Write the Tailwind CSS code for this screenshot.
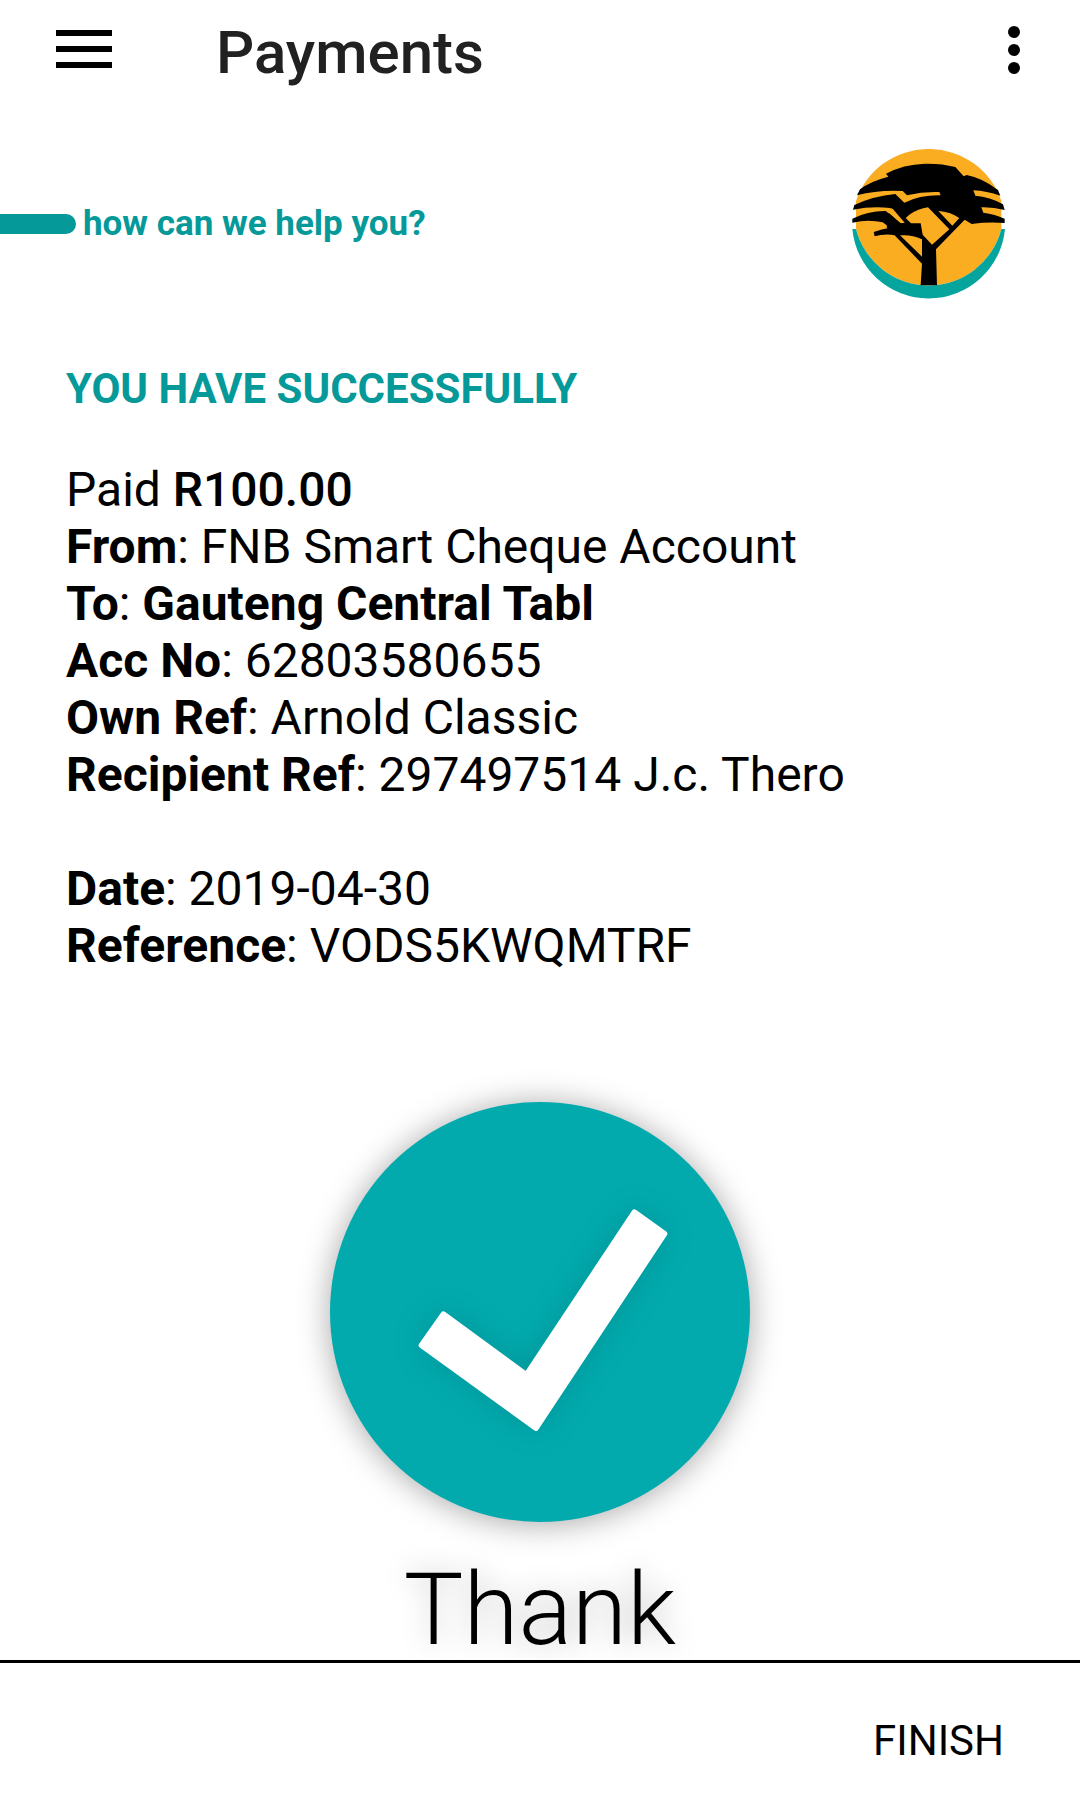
<!DOCTYPE html>
<html lang="en">
<head>
<meta charset="utf-8">
<meta name="viewport" content="width=device-width, initial-scale=1">
<title>Payments</title>
<script src="https://cdn.jsdelivr.net/npm/@tailwindcss/browser@4"></script>
</head>
<body class="flex min-h-screen flex-col bg-white font-['Roboto',sans-serif] text-black">
  <header class="flex h-[98px] items-center pr-[60px] pl-14">
    <button type="button" aria-label="Menu" class="flex w-14 flex-col gap-[10px]">
      <span class="h-[6px] w-full bg-black"></span>
      <span class="h-[6px] w-full bg-black"></span>
      <span class="h-[6px] w-full bg-black"></span>
    </button>
    <h1 class="ml-[104px] flex-1 pt-2 text-[60px] leading-[70px] font-medium text-[#212121]">Payments</h1>
    <button type="button" aria-label="More options" class="flex flex-col gap-[6px] pt-[2px]">
      <span class="size-3 rounded-full bg-black"></span>
      <span class="size-3 rounded-full bg-black"></span>
      <span class="size-3 rounded-full bg-black"></span>
    </button>
  </header>

  <main class="flex flex-1 flex-col">
    <div class="mt-[51px] flex items-center pr-[75px]">
      <span class="h-5 w-[76px] rounded-r-full bg-[#059999]"></span>
      <p class="ml-[7px] flex-1 text-[35px] leading-[42px] font-bold text-[#059999]">how can we help you?</p>
      <svg class="h-[150px] w-[153px]" viewBox="36 27 459 450" role="img" aria-label="FNB">
        <path fill="#fbad22" d="M48 267V183A229 225 0 0 1 484 183V267A225 225 0 0 1 48 267Z"/>
        <path fill="#05a59d" d="M37 267H48A225 225 0 0 0 484 267H495A230 230 0 0 1 37 267Z"/>
        <path d="M51 166L60 148Q90 124 145 110L138 101Q190 73 255 71Q305 70 346 81L371 109L380 105Q425 113 474 150L481 167Q440 153 400 151L406 167Q450 170 489 193L494 210Q460 201 424 202L430 218Q465 222 494 236V249Q445 245 395 252L374 239L288 328L291 436H242L246 371L163 285Q130 281 104 289L101 276Q125 267 150 263L128 247Q85 237 37 248V236Q85 212 138 213L182 249L192 248L150 204Q95 198 39 209L43 195Q100 168 166 162L193 188Q240 165 302 166L298 156Q250 154 201 166L188 153Q115 149 51 166Z"/>
        <path fill="#fbad22" d="M138 213L148 204L188 248L182 250ZM208 224Q235 206 264 202L328 268L276 314L248 284L242 250H213L197 234ZM295 213Q330 215 358 234L337 257ZM180 286Q215 283 246 298V350ZM150 204L158 206L194 248H182Z"/>
        <path d="M146 218L184 252H240L248 292Q205 276 160 286L140 262Z"/>
      </svg>
    </div>

    <section class="mt-[65px] px-[66px]">
      <h2 class="text-[42px] leading-[49px] font-bold text-[#059999]">YOU HAVE SUCCESSFULLY</h2>
      <div class="mt-12 text-[48px] leading-[57px] font-normal">
        <p>Paid <strong class="font-medium">R100.00</strong></p>
        <p><strong class="font-bold">From</strong>: FNB Smart Cheque Account</p>
        <p><strong class="font-bold">To</strong>: <strong class="font-bold">Gauteng Central Tabl</strong></p>
        <p><strong class="font-bold">Acc No</strong>: 62803580655</p>
        <p><strong class="font-bold">Own Ref</strong>: Arnold Classic</p>
        <p><strong class="font-bold">Recipient Ref</strong>: 297497514 J.c. Thero</p>
        <p class="mt-[57px]"><strong class="font-bold">Date</strong>: 2019-04-30</p>
        <p><strong class="font-bold">Reference</strong>: VODS5KWQMTRF</p>
      </div>
    </section>

    <section class="mt-32 flex flex-col items-center">
      <div class="size-[420px] rounded-full bg-[#02aaae] shadow-[0_2px_32px_rgba(0,0,0,0.35)]">
        <svg class="size-full" viewBox="90 96 1260 1260" role="img" aria-label="Success">
          <path class="drop-shadow-[0_0_50px_rgba(0,0,0,0.12)]" fill="#fff" stroke="#fff" stroke-width="16" stroke-linejoin="round" d="M1003 426L1094 491L708 1075L364 826L430 732L679 914Z"/>
        </svg>
      </div>
      <p class="mt-[38px] text-[100px] leading-[100px] font-light text-shadow-[0_0_28px_rgba(0,0,0,0.25)]">Thank</p>
    </section>
  </main>

  <footer class="flex justify-end border-t-[3px] border-black bg-white pt-[53px] pr-[76px] pb-[49px]">
    <button type="button" class="text-[42px] leading-[49px] font-normal">FINISH</button>
  </footer>
</body>
</html>
